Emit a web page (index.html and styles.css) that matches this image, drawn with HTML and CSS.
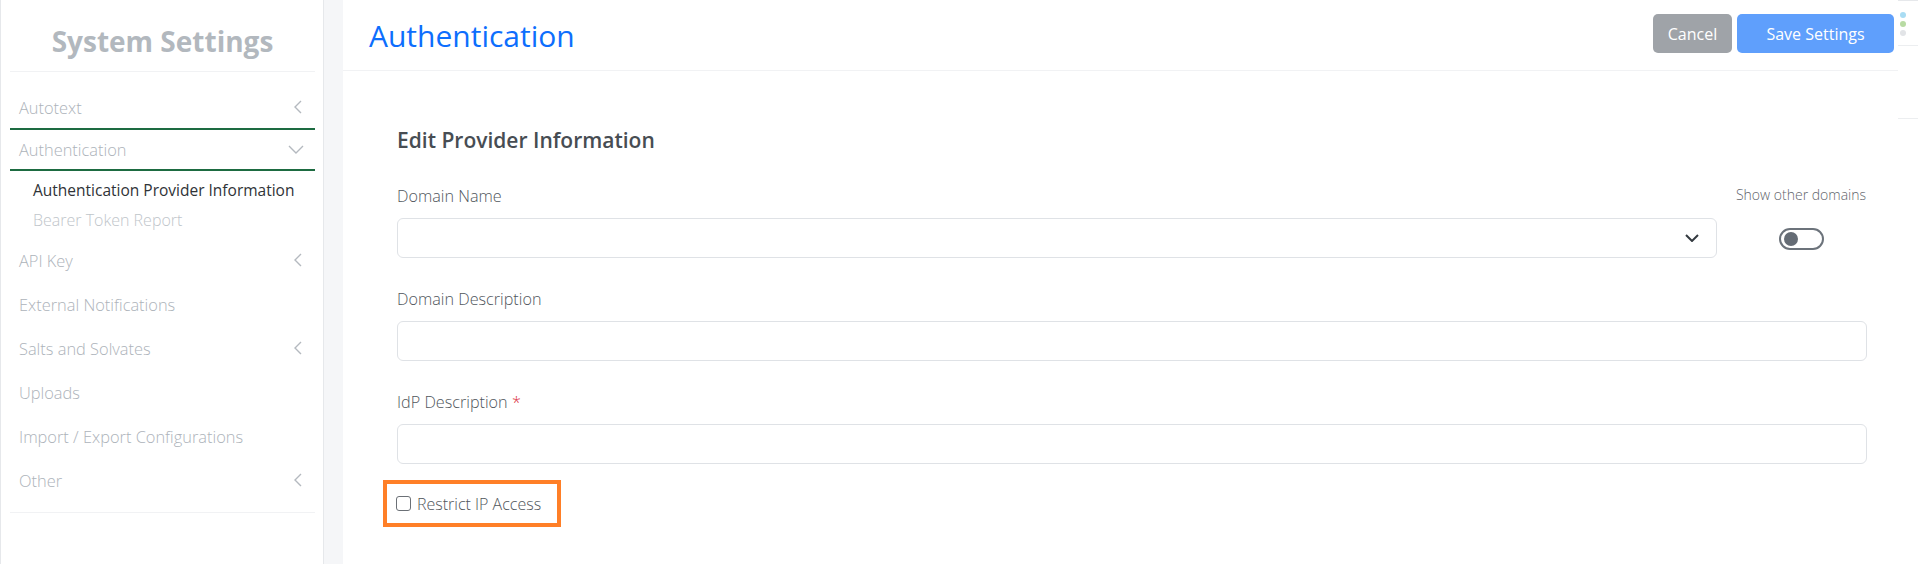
FILE: index.html
```html
<!DOCTYPE html>
<html lang="en">
<head>
    <meta charset="UTF-8">
    <meta name="viewport" content="width=device-width, initial-scale=1.0">
    <title>System Settings - Authentication</title>
    <link rel="stylesheet" href="styles.css">
</head>
<body>
    <div class="layout">
        <aside class="sidebar">
            <h2 class="sidebar-title">System Settings</h2>
            <nav class="nav">
                <a class="nav-item bordered tall">
                    <span>Autotext</span>
                    <svg class="chev-left" width="9" height="14" viewBox="0 0 9 14"><path d="M8 1 2 7l6 6"/></svg>
                </a>
                <a class="nav-item bordered">
                    <span>Authentication</span>
                    <svg class="chev-down" width="16" height="9" viewBox="0 0 16 9"><path d="M1 1l7 7 7-7"/></svg>
                </a>
                <div class="subnav">
                    <a class="subnav-item active">Authentication Provider Information</a>
                    <a class="subnav-item">Bearer Token Report</a>
                </div>
                <a class="nav-item">
                    <span>API Key</span>
                    <svg class="chev-left" width="9" height="14" viewBox="0 0 9 14"><path d="M8 1 2 7l6 6"/></svg>
                </a>
                <a class="nav-item"><span>External Notifications</span></a>
                <a class="nav-item">
                    <span>Salts and Solvates</span>
                    <svg class="chev-left" width="9" height="14" viewBox="0 0 9 14"><path d="M8 1 2 7l6 6"/></svg>
                </a>
                <a class="nav-item"><span>Uploads</span></a>
                <a class="nav-item"><span>Import / Export Configurations</span></a>
                <a class="nav-item">
                    <span>Other</span>
                    <svg class="chev-left" width="9" height="14" viewBox="0 0 9 14"><path d="M8 1 2 7l6 6"/></svg>
                </a>
            </nav>
            <div class="nav-end"></div>
        </aside>

        <main class="main">
            <header class="page-header">
                <h1>Authentication</h1>
                <div class="actions">
                    <button class="btn btn-cancel">Cancel</button>
                    <button class="btn btn-save">Save Settings</button>
                </div>
            </header>

            <form class="form">
                <h3 class="form-title">Edit Provider Information</h3>

                <div class="domain-row">
                    <div class="field grow">
                        <label class="label">Domain Name</label>
                        <div class="control select">
                            <svg width="14" height="8" viewBox="0 0 14 8"><path d="M1 1l6 6 6-6"/></svg>
                        </div>
                    </div>
                    <div class="other-domains">
                        <span class="small-label">Show other domains</span>
                        <span class="switch"></span>
                    </div>
                </div>

                <div class="field">
                    <label class="label">Domain Description</label>
                    <div class="control"></div>
                </div>

                <div class="field">
                    <label class="label">IdP Description <span class="req">*</span></label>
                    <div class="control"></div>
                </div>

                <div class="highlight">
                    <label class="check">
                        <input type="checkbox">
                        <span>Restrict IP Access</span>
                    </label>
                </div>
            </form>
        </main>

        <div class="side-strip">
            <div class="dots">
                <span class="dot blue"></span>
                <span class="dot green"></span>
                <span class="dot grey"></span>
            </div>
            <div class="strip-block"></div>
        </div>
    </div>
</body>
</html>
```

FILE: styles.css
```css
* {
    box-sizing: border-box;
}
body {
    margin: 0;
    font-family: "Open Sans", sans-serif;
    background-color: #f5f6f8;
    color: #495057;
}
.layout {
    display: flex;
    height: 100vh;
    overflow: hidden;
}

/* sidebar */
.sidebar {
    width: 324px;
    flex-shrink: 0;
    background-color: #fff;
    border-left: 1px solid #e6e8eb;
    border-right: 1px solid #e6e8eb;
    padding: 0 8px 0 9px;
}
.sidebar-title {
    margin: 0;
    padding: 23px 0 12px;
    font-size: 28px;
    line-height: 36px;
    font-weight: 700;
    color: #b2b8be;
    text-align: center;
    border-bottom: 1px solid #f1f2f4;
}
.nav {
    padding-top: 14px;
}
.nav-item {
    display: flex;
    align-items: center;
    justify-content: space-between;
    height: 44px;
    padding: 0 13px 0 9px;
    font-size: 16.4px;
    font-weight: 300;
    color: #adb3ba;
    cursor: pointer;
}
.nav-item.bordered {
    height: 41px;
    border-bottom: 2px solid #1d6b41;
}
.nav-item.bordered.tall {
    height: 44px;
}
.nav-item svg path {
    fill: none;
    stroke: #b4b9bf;
    stroke-width: 1.4;
}
.chev-down {
    margin-right: -2px;
}
.subnav {
    padding: 4px 0 3px;
}
.subnav-item {
    display: block;
    height: 30px;
    line-height: 30px;
    padding-left: 23px;
    font-size: 16px;
    font-weight: 300;
    color: #c0c5ca;
}
.subnav-item.active {
    font-size: 15.5px;
    color: #2f3337;
    font-weight: 400;
}
.nav-end {
    margin-top: 10px;
    border-top: 1px solid #f1f2f4;
}

/* main panel */
.main {
    flex: 1;
    margin-left: 19px;
    background-color: #fff;
}
.page-header {
    display: flex;
    justify-content: space-between;
    align-items: flex-start;
    height: 71px;
    padding: 14px 4px 0 26px;
    border-bottom: 1px solid #f1f2f4;
}
.page-header h1 {
    margin: 0;
    font-size: 30px;
    line-height: 44px;
    font-weight: 400;
    color: #0d6efd;
}
.actions {
    display: flex;
    gap: 5px;
}
.btn {
    height: 39px;
    border: none;
    border-radius: 5px;
    font-family: inherit;
    font-size: 16px;
    color: #fff;
}
.btn-cancel {
    width: 79px;
    background-color: #9fa3a8;
}
.btn-save {
    width: 157px;
    background-color: #5f9ffc;
}

/* form */
.form {
    padding: 57px 31px 0 54px;
}
.form-title {
    margin: 0 0 33px;
    font-size: 21px;
    line-height: 24px;
    font-weight: 600;
    color: #474d53;
}
.domain-row {
    display: flex;
    gap: 18px;
}
.grow {
    flex: 1;
}
.field {
    margin-bottom: 30px;
}
.label {
    display: block;
    margin-bottom: 11px;
    font-size: 16.2px;
    line-height: 22px;
    font-weight: 300;
    color: #50565c;
}
.req {
    color: #dc3545;
}
.control {
    height: 40px;
    border: 1px solid #dfe2e6;
    border-radius: 6px;
}
.select {
    display: flex;
    align-items: center;
    justify-content: flex-end;
    padding-right: 17px;
}
.select svg path {
    fill: none;
    stroke: #343a40;
    stroke-width: 2;
}
.other-domains {
    width: 132px;
    display: flex;
    flex-direction: column;
    align-items: center;
}
.small-label {
    font-size: 14px;
    line-height: 20px;
    font-weight: 300;
    color: #5f656b;
    white-space: nowrap;
}
.switch {
    position: relative;
    margin-top: 23px;
    width: 45px;
    height: 22px;
    border: 2px solid #6c737b;
    border-radius: 11px;
}
.switch::after {
    content: "";
    position: absolute;
    left: 3px;
    top: 2px;
    width: 14px;
    height: 14px;
    border-radius: 50%;
    background-color: #656c75;
}
.highlight {
    display: inline-flex;
    align-items: center;
    height: 47px;
    margin: -18px 0 0 -14px;
    padding: 0 16px 0 9px;
    border: 4px solid #ff7f27;
}
.check {
    display: flex;
    align-items: center;
    gap: 6px;
    font-size: 16px;
    font-weight: 300;
    color: #50565c;
}
.check input {
    appearance: none;
    margin: 0;
    width: 15px;
    height: 15px;
    border: 1.5px solid #6b7076;
    border-radius: 3px;
    background-color: #fff;
}

/* partial panel on the right edge */
.side-strip {
    width: 20px;
    flex-shrink: 0;
    background-color: #fff;
    border-top: 1px solid #e6e8eb;
}
.dots {
    display: flex;
    flex-direction: column;
    gap: 3px;
    height: 45px;
    padding: 11px 0 0 2px;
    border-bottom: 1px solid #eceef0;
}
.dot {
    width: 6px;
    height: 6px;
    border-radius: 50%;
}
.dot.blue {
    background-color: #a9dcf3;
}
.dot.green {
    background-color: #b8dba3;
}
.dot.grey {
    background-color: #e2e4e7;
}
.strip-block {
    height: 73px;
    border-bottom: 1px solid #eceef0;
}
```
